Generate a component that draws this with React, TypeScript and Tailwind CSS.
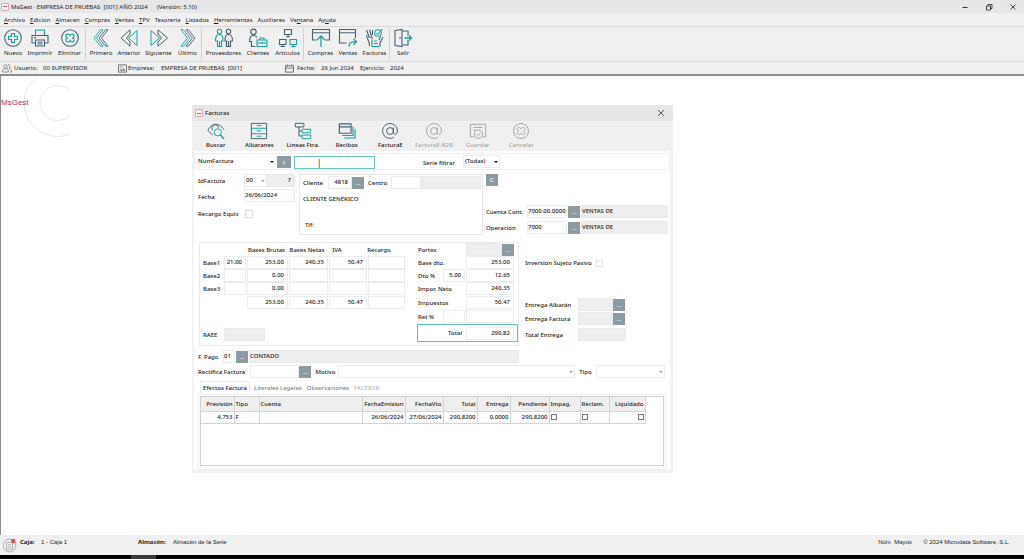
import React from 'react';
import clsx from 'clsx';

const DARK = '#456273';
const TEAL = '#17a2a2';
const GREY = '#a3a3a3';

interface IconProps {
  className?: string;
  children: React.ReactNode;
}

function Icon({ className, children }: IconProps) {
  return (
    <svg
      viewBox="0 0 20 20"
      fill="none"
      stroke={DARK}
      strokeWidth={1.1}
      aria-hidden="true"
      className={clsx('shrink-0', className ?? 'size-5')}
    >
      {children}
    </svg>
  );
}

const QUAD =
  'M10 7.6C9 5.4 5.6 5.6 5.8 8.2C6 9.4 7 9.4 7.4 10C7 10.6 6 10.6 5.8 11.8C5.6 14.4 9 14.6 10 12.4C11 14.6 14.4 14.4 14.2 11.8C14 10.6 13 10.6 12.6 10C13 9.4 14 9.4 14.2 8.2C14.4 5.6 11 5.4 10 7.6Z';

const icons = {
  nuevo: (
    <>
      <circle cx="10" cy="10" r="8.3" />
      <path stroke={TEAL} d="M8.5 5.5h3v3h3v3h-3v3h-3v-3h-3v-3h3z" />
    </>
  ),
  imprimir: (
    <>
      <path stroke={TEAL} d="M5.5 7V2h9v5" />
      <path d="M5.5 15H2V7.5h16V15h-3.5" />
      <path d="M5.5 12h9v6h-9zM7.5 14.2h5M7.5 16h5M4 9.6h2" />
    </>
  ),
  eliminar: (
    <>
      <circle cx="10" cy="10" r="8.3" />
      <path stroke={TEAL} d={QUAD} />
    </>
  ),
  primero: (
    <g strokeWidth="0.9">
      <path stroke={TEAL} d="M9.500 1.800h2.500L5.500 10l6.500 8.200H9.500L3 10z" />
      <path d="M14.500 1.800H17L10.500 10l6.500 8.200h-2.500L8 10z" />
    </g>
  ),
  anterior: (
    <g strokeWidth="1">
      <path d="M11 1.800V6L7.500 10l3.500 4v4.200L2 10z" />
      <path stroke={TEAL} d="M18 2.500v15L9.500 10z" />
    </g>
  ),
  siguiente: (
    <g strokeWidth="1">
      <path stroke={TEAL} d="M2 2.500v15l8.500-7.500z" />
      <path d="M9 1.800V6l3.500 4L9 14v4.200L18.500 10z" />
    </g>
  ),
  ultimo: (
    <g strokeWidth="0.9">
      <path stroke={TEAL} d="M3 1.800h2.500L12 10l-6.500 8.200H3L9.500 10z" />
      <path d="M8 1.800h2.500L17 10l-6.500 8.200H8L14.500 10z" />
    </g>
  ),
  proveedores: (
    <>
      <g stroke={TEAL}>
        <circle cx="5.500" cy="3.500" r="2.200" />
        <path d="M5.500 6.500C2.500 6.500 1.500 8.500 1.500 13h2v5.500h4V13h1.500c0-4.500-.5-6.500-3.500-6.500zM5.500 13v5" />
      </g>
      <circle cx="14.500" cy="3.500" r="2.200" />
      <path d="M14.500 6.500c-3 0-3.500 2-3.500 6.500h1.500v5.500h4V13h2c0-4.500-1-6.500-4-6.500zM14.500 13v5" />
    </>
  ),
  clientes: (
    <>
      <circle cx="5.500" cy="3.800" r="2.700" />
      <path d="M9 9.500C8.300 8 7 7.500 5.500 7.500c-3 0-4 2-4 6h2v5h4" />
      <path stroke={TEAL} d="M9 12h10v6.500H9zM12 12v-2h4v2M9 15h10M14 14v2" />
    </>
  ),
  articulos: (
    <>
      <path d="M6.500 1.500h7v5h-7zM10 6.500V9M8 8.800h4" />
      <path d="M1.500 11.500H8v5H1.500zM4.800 16.500v2M2.500 18.500h4.500" />
      <path stroke={TEAL} d="M12 11.500h6.500v5H12zM15.200 16.500v2M13 18.500h4.500" />
    </>
  ),
  compras: (
    <>
      <path d="M5.500 12H1.500V1.500h17V12h-4M1.500 4.800h17" />
      <path stroke={TEAL} strokeWidth="1.300" d="M10 19V8M6 12l4-4 4 4" />
    </>
  ),
  ventas: (
    <>
      <path d="M8.500 15H1.500V1.500h16V10M1.500 4.800h16" />
      <path stroke={TEAL} strokeWidth="1.300" d="M11 18.500c0-3.500 2-4.800 7-4.800M15.500 10.800l3 2.900-3 3" />
    </>
  ),
  facturas: (
    <>
      <path d="M1.500 2l3 8M4.500 1.500l2 7M7.500 2v5M1.500 7c.5 5 3 5 3 11M8 10l-2.500-1M18 9l-3 6v3.500M15.500 8.500L14 12" />
      <circle cx="13" cy="5" r="3.300" stroke={TEAL} />
      <path stroke={TEAL} d="M11.500 5l1.200 1.300L17.500 1M7 11v7.500h7.500M9 13h3M9 15.500h4" />
    </>
  ),
  salir: (
    <>
      <path d="M2 2.500l7-1v17l-7-1zM9 3h6v5M9 17h6v-5M7 9v2" />
      <path stroke={TEAL} strokeWidth="1.300" d="M11.500 10h7M16 7.500l2.500 2.500-2.500 2.500" />
    </>
  ),
  buscar: (
    <>
      <path d="M1 9C4 3.500 8 2.500 10 2.500S16 3.500 19 9M1 9c1.500 2.500 3.500 4.300 5.500 5M6.500 9.500A3.800 3.800 0 1 1 13 6.500" />
      <circle cx="12" cy="11.500" r="4" stroke={TEAL} />
      <path stroke={TEAL} strokeWidth="1.600" d="M15 14.500l4 4.500" />
    </>
  ),
  albaranes: (
    <>
      <path d="M1.500 1.500h17v17h-17z" />
      <path stroke={TEAL} d="M7.500 4h5M7.500 9.800h5M7.500 15.800h5M2 7h16M2 13h16" />
    </>
  ),
  lineas: (
    <>
      <path d="M1.500 1.500H11v4H1.500zM5.500 5.500v10H9M5.500 10H9" />
      <path stroke={TEAL} d="M9 8h9.500v4H9z" />
      <path stroke={TEAL} d="M9 14.500h9.500v4H9z" />
    </>
  ),
  recibos: (
    <>
      <path d="M1.500 2h13v10.500h-13zM1.500 5.500h13" strokeWidth="1.300" />
      <path stroke={TEAL} strokeWidth="1.300" d="M4.500 15h12.200V5M7 17.800h12V8" />
    </>
  ),
  arroba: (
    <>
      <circle cx="10" cy="10" r="3.800" />
      <path d="M13.800 6v5.500c0 3 4.500 2.800 4.500-1.500a8.300 8.300 0 1 0-4 7" />
    </>
  ),
  guardar: (
    <>
      <path d="M5 16.500H1.500v-14h17v14H15M5 6h10M5 9h3" />
      <circle cx="10.500" cy="13.500" r="4.500" />
      <path d="M8.500 13.500l1.500 1.500 2.800-3" />
    </>
  ),
  cancelar: (
    <>
      <circle cx="10" cy="10" r="8.300" />
      <path d={QUAD} />
    </>
  ),
};

type IconName = keyof typeof icons;

interface Tool {
  icon: IconName;
  label: string;
  width: string;
}

const toolGroups: Tool[][] = [
  [
    { icon: 'nuevo', label: 'Nuevo', width: 'w-[26px]' },
    { icon: 'imprimir', label: 'Imprimir', width: 'w-[28px]' },
    { icon: 'eliminar', label: 'Eliminar', width: 'w-[31px]' },
  ],
  [
    { icon: 'primero', label: 'Primero', width: 'w-[28px]' },
    { icon: 'anterior', label: 'Anterior', width: 'w-[28px]' },
    { icon: 'siguiente', label: 'Siguiente', width: 'w-[31px]' },
    { icon: 'ultimo', label: 'Último', width: 'w-[27px]' },
  ],
  [
    { icon: 'proveedores', label: 'Proveedores', width: 'w-[41px]' },
    { icon: 'clientes', label: 'Clientes', width: 'w-[28px]' },
    { icon: 'articulos', label: 'Artículos', width: 'w-[31px]' },
  ],
  [
    { icon: 'compras', label: 'Compras', width: 'w-[31px]' },
    { icon: 'ventas', label: 'Ventas', width: 'w-[24px]' },
    { icon: 'facturas', label: 'Facturas', width: 'w-[29px]' },
  ],
  [{ icon: 'salir', label: 'Salir', width: 'w-[24px]' }],
];

const menus: [string, string, string][] = [
  ['', 'A', 'rchivo'],
  ['', 'E', 'dicion'],
  ['', 'A', 'lmacen'],
  ['', 'C', 'ompras'],
  ['', 'V', 'entas'],
  ['', 'T', 'PV'],
  ['Tesoreria', '', ''],
  ['', 'L', 'istados'],
  ['', 'H', 'erramientas'],
  ['Auxiliares', '', ''],
  ['Ve', 'n', 'tana'],
  ['Ay', 'u', 'da'],
];

const dialogTools: { icon: IconName; label: string; disabled?: boolean }[] = [
  { icon: 'buscar', label: 'Buscar' },
  { icon: 'albaranes', label: 'Albaranes' },
  { icon: 'lineas', label: 'Lineas Ftra.' },
  { icon: 'recibos', label: 'Recibos' },
  { icon: 'arroba', label: 'FacturaE' },
  { icon: 'arroba', label: 'FacturaE-B2B', disabled: true },
  { icon: 'guardar', label: 'Guardar', disabled: true },
  { icon: 'cancelar', label: 'Cancelar', disabled: true },
];

function AppBadge() {
  return (
    <span className="flex size-2 items-center justify-center rounded-[1px] border border-[#dba9b4] bg-[#fbeef1]">
      <span className="h-px w-1 bg-[#c0607a]" />
    </span>
  );
}

interface FieldProps {
  id?: string;
  label?: string;
  value?: string;
  width: string;
  align?: 'left' | 'right';
  grey?: boolean;
}

function Field({ id, label, value = '', width, align = 'left', grey }: FieldProps) {
  return (
    <input
      id={id}
      aria-label={label}
      type="text"
      defaultValue={value}
      readOnly={grey}
      className={clsx(
        'block h-[13px] shrink-0 border pb-px outline-none',
        width,
        align === 'right' && 'pr-[3px] text-right',
        grey ? 'border-[#eaeaea] bg-[#eeeeee]' : 'border-[#ececec] bg-white',
      )}
    />
  );
}

function Dots({ label, children = '...' }: { label: string; children?: React.ReactNode }) {
  return (
    <button
      type="button"
      aria-label={label}
      className="flex h-3 w-3 shrink-0 items-center justify-center bg-[#8b9ba1] text-white"
    >
      {children}
    </button>
  );
}

interface PickerProps {
  id?: string;
  label?: string;
  value?: string;
  width: string;
  border?: boolean;
  faint?: boolean;
}

function Picker({ id, label, value = '', width, border = true, faint }: PickerProps) {
  return (
    <div className={clsx('relative shrink-0', width)}>
      <select
        id={id}
        aria-label={label}
        className={clsx(
          'block h-[13px] w-full appearance-none bg-white px-px pb-px outline-none',
          border && 'border border-[#ececec]',
        )}
      >
        <option>{value}</option>
      </select>
      <svg
        viewBox="0 0 4 2"
        fill={faint ? '#a0a0a0' : '#111111'}
        className="pointer-events-none absolute right-[2px] top-[6px] h-[2px] w-1"
      >
        <path d="M0 0h4L2 2z" />
      </svg>
    </div>
  );
}

const bases = [
  { name: 'Base1', pct: '21,00', values: ['253,00', '240,35', '50,47', ''] },
  { name: 'Base2', pct: '', values: ['0,00', '', '', ''] },
  { name: 'Base3', pct: '', values: ['0,00', '', '', ''] },
];

const totals = ['253,00', '240,35', '50,47', ''];
const headings = ['Bases Brutas', 'Bases Netas', 'IVA', 'Recargo'];
const colWidths = ['w-[41px]', 'w-[39px]', 'w-[38px]', 'w-[37px]'];
const headWidths = ['w-[41px]', 'w-[40px]', 'w-[20px]', 'w-[64px]'];

function BasesGrid() {
  return (
    <div className="w-[214px] shrink-0 pl-[3px]">
      <div className="flex h-[13px] items-center pl-[43px]">
        {headings.map((heading, i) => (
          <span key={heading} className={clsx('shrink-0 whitespace-nowrap text-center', headWidths[i])}>
            {heading}
          </span>
        ))}
      </div>
      {bases.map((base) => (
        <div key={base.name} className="flex items-center gap-px">
          <span className="w-5 shrink-0 pt-px">{base.name}</span>
          <Field label={`${base.name} %`} value={base.pct} width="w-[22px]" align="right" />
          {base.values.map((value, i) => (
            <Field
              key={headings[i]}
              label={`${base.name} ${headings[i]}`}
              value={value}
              width={colWidths[i]}
              align="right"
            />
          ))}
        </div>
      ))}
      <div className="mt-px flex gap-px pl-[44px]">
        {totals.map((value, i) => (
          <Field
            key={headings[i]}
            label={`Total ${headings[i]}`}
            value={value}
            width={colWidths[i]}
            align="right"
          />
        ))}
      </div>
      <div className="mt-[19px] flex items-center gap-px">
        <label htmlFor="raee" className="w-5">
          RAEE
        </label>
        <Field id="raee" width="w-[41px]" grey />
      </div>
    </div>
  );
}

function TotalsColumn() {
  return (
    <div className="flex w-[101px] shrink-0 flex-col">
      <div className="flex h-[13px] items-center pl-px">
        <label htmlFor="portes" className="grow">
          Portes
        </label>
        <Field id="portes" width="w-9" grey />
        <div className="pr-1">
          <Dots label="Buscar portes" />
        </div>
      </div>
      <div className="flex items-center pl-px pr-1">
        <label htmlFor="basedto" className="grow pt-px">
          Base dto.
        </label>
        <Field id="basedto" value="253,00" width="w-12" align="right" />
      </div>
      <div className="flex items-center gap-px pl-px pr-1">
        <label htmlFor="dto" className="grow">
          Dto %
        </label>
        <Field id="dto" value="5,00" width="w-[22px]" align="right" />
        <Field label="Importe descuento" value="12,65" width="w-12" align="right" />
      </div>
      <div className="flex items-center pl-px pr-1">
        <label htmlFor="neto" className="grow">
          Impor. Neto
        </label>
        <Field id="neto" value="240,35" width="w-12" align="right" />
      </div>
      <div className="mt-px flex items-center pl-px pr-1">
        <label htmlFor="impuestos" className="grow">
          Impuestos
        </label>
        <Field id="impuestos" value="50,47" width="w-12" align="right" />
      </div>
      <div className="mt-px flex items-center gap-px pl-px pr-1">
        <label htmlFor="ret" className="grow">
          Ret %
        </label>
        <Field id="ret" width="w-[22px]" />
        <Field label="Importe retención" width="w-12" />
      </div>
      <div className="mt-px flex h-[18px] items-center gap-1 border border-[#5fbfbf] pr-[3px]">
        <label htmlFor="total" className="grow text-right">
          Total
        </label>
        <Field id="total" value="290,82" width="w-12" align="right" />
      </div>
    </div>
  );
}

function CustomerSection() {
  return (
    <div className="flex h-[62px] pl-1">
      <div className="flex w-[101px] shrink-0 flex-col gap-[2px]">
        <div className="flex items-center">
          <label htmlFor="idfactura" className="w-[46px] pt-px">
            IdFactura
          </label>
          <Picker id="idfactura" value="00" width="w-[23px]" faint />
          <Field label="Número" value="7" width="w-[28px]" align="right" grey />
        </div>
        <div className="flex items-center">
          <label htmlFor="fecha" className="w-[46px] pt-[2px]">
            Fecha
          </label>
          <Field id="fecha" value="26/06/2024" width="w-[51px]" />
        </div>
        <div className="flex h-[14px] items-end">
          <label htmlFor="recargo" className="w-[47px] whitespace-nowrap">
            Recargo Equiv
          </label>
          <input id="recargo" type="checkbox" className="size-2 appearance-none border border-[#dcdcdc]" />
        </div>
      </div>
      <div className="flex h-[61px] w-[184px] shrink-0 flex-col border border-[#e6e6e6] p-px">
        <div className="flex items-center">
          <label htmlFor="cliente" className="w-[27px] pl-[2px]">
            Cliente
          </label>
          <Field id="cliente" value="4818" width="w-6" align="right" />
          <Dots label="Buscar cliente" />
          <label htmlFor="centro" className="w-[27px] pl-1">
            Centro
          </label>
          <Field id="centro" width="w-[30px]" />
          <Field label="Nombre del centro" width="w-[60px]" grey />
        </div>
        <span className="pl-[2px] pt-[6px]">CLIENTE GENÉRICO</span>
        <span className="pl-1 pt-[18px]">Tlf:</span>
      </div>
      <div className="flex grow flex-col gap-[3px] pl-[3px]">
        <div className="mb-4">
          <Dots label="Consultar cliente">C</Dots>
        </div>
        <div className="flex items-center gap-px">
          <label htmlFor="cuenta" className="w-10 whitespace-nowrap pt-px">
            Cuenta Cont.
          </label>
          <Field id="cuenta" value="7000.00.0000" width="w-10" />
          <Dots label="Buscar cuenta" />
          <Field label="Nombre de cuenta" value="VENTAS DE" width="w-[87px]" grey />
        </div>
        <div className="flex items-center gap-px">
          <label htmlFor="operacion" className="w-10 pt-px">
            Operación
          </label>
          <Field id="operacion" value="7000" width="w-10" />
          <Dots label="Buscar operación" />
          <Field label="Nombre de operación" value="VENTAS DE" width="w-[87px]" grey />
        </div>
      </div>
    </div>
  );
}

function DeliverySection() {
  return (
    <div className="flex flex-col gap-px pl-[6px] pt-[15px]">
      <div className="mb-[27px] flex h-3 items-center gap-1">
        <label htmlFor="pasivo">Inversión Sujeto Pasivo</label>
        <input id="pasivo" type="checkbox" className="size-[7px] appearance-none border border-[#e3e3e3]" />
      </div>
      <div className="mt-px flex items-center">
        <label htmlFor="albaran" className="w-[53px] whitespace-nowrap">
          Entrega Albarán
        </label>
        <Field id="albaran" width="w-[35px]" grey />
        <Dots label="Buscar albarán" />
      </div>
      <div className="flex items-center">
        <label htmlFor="factura" className="w-[53px] whitespace-nowrap">
          Entrega Factura
        </label>
        <Field id="factura" width="w-[35px]" grey />
        <Dots label="Buscar factura" />
      </div>
      <div className="mt-[2px] flex items-center">
        <label htmlFor="entrega" className="w-[53px]">
          Total Entrega
        </label>
        <Field id="entrega" width="w-12" grey />
      </div>
    </div>
  );
}

const columns = [
  { name: 'Previsión', width: 'w-[33px]', right: true, value: '4.753' },
  { name: 'Tipo', width: 'w-[25px]', right: false, value: 'F' },
  { name: 'Cuenta', width: 'w-[103px]', right: false, value: '' },
  { name: 'FechaEmision', width: 'w-[43px]', right: true, value: '26/06/2024' },
  { name: 'FechaVto', width: 'w-[38px]', right: true, value: '27/06/2024' },
  { name: 'Total', width: 'w-[34px]', right: true, value: '290,8200' },
  { name: 'Entrega', width: 'w-[33px]', right: true, value: '0,0000' },
  { name: 'Pendiente', width: 'w-[39px]', right: true, value: '290,8200' },
  { name: 'Impag.', width: 'w-[31px]', right: false, check: true },
  { name: 'Reclam.', width: 'w-[29px]', right: false, check: true },
  { name: 'Liquidado', width: 'w-[36px]', right: true, check: true },
];

function EffectsTable() {
  return (
    <div className="h-[70px] border border-[#cfcfcf]">
      <table className="table-fixed border-collapse">
        <thead>
          <tr className="h-[14px] bg-[#efefef]">
            {columns.map((col) => (
              <th
                key={col.name}
                className={clsx(
                  'border-b border-r border-[#d4d4d4] p-0 px-px font-medium',
                  col.width,
                  col.right ? 'text-right' : 'text-left',
                )}
              >
                {col.name}
              </th>
            ))}
          </tr>
        </thead>
        <tbody>
          <tr className="h-3">
            {columns.map((col) => (
              <td
                key={col.name}
                className={clsx(
                  'border-b border-r border-[#d4d4d4] p-0 px-px',
                  col.right ? 'text-right' : 'text-left',
                )}
              >
                {col.check ? (
                  <input
                    type="checkbox"
                    aria-label={col.name}
                    className="block size-[6px] appearance-none border border-[#777777] last:ml-auto"
                    style={{ marginLeft: col.right ? 'auto' : 0 }}
                  />
                ) : (
                  col.value
                )}
              </td>
            ))}
          </tr>
        </tbody>
      </table>
    </div>
  );
}

function InvoiceDialog() {
  return (
    <section className="absolute left-[191px] top-[29px] w-[481px] border-b-[3px] border-l-2 border-r-[3px] border-[#f2f2f2] bg-white text-[6px] font-medium leading-[8px]">
      <header className="-ml-[2px] -mr-[3px] flex h-4 items-center gap-[2px] bg-[#e7e7e7] pl-[3px] pr-2">
        <AppBadge />
        <h2 className="grow">Facturas</h2>
        <button type="button" aria-label="Cerrar">
          <svg viewBox="0 0 8 8" stroke="#333333" strokeWidth="0.800" className="size-2">
            <path d="M1 1l6 6M7 1L1 7" />
          </svg>
        </button>
      </header>
      <div className="-ml-[2px] -mr-[3px] bg-[#f0f0f0] pl-[2px]">
        <div className="flex h-[30px] w-[349px]">
          {dialogTools.map((tool) => (
            <button
              key={tool.label}
              type="button"
              disabled={tool.disabled}
              className={clsx(
                'flex flex-1 basis-0 flex-col items-center whitespace-nowrap pt-px',
                tool.disabled && 'text-[#a8a8a8]',
              )}
            >
              <Icon className={clsx('size-[18px]', tool.disabled && 'stroke-[#a3a3a3]')}>
                {icons[tool.icon]}
              </Icon>
              <span className="pt-px">{tool.label}</span>
            </button>
          ))}
        </div>
      </div>

      <div className="mt-[2px] flex h-[17px] items-start border border-[#eeeeee] pl-[2px] pt-px">
        <Picker label="Campo de búsqueda" value="NumFactura" width="w-[79px]" border={false} />
        <div className="pl-px pt-px">
          <button
            type="button"
            aria-label="Buscar siguiente"
            className="flex h-3 w-[14px] items-center justify-center bg-[#8b9ba1] text-[8px] text-white"
          >
            ›
          </button>
        </div>
        <div className="flex w-[84px] pl-[3px] pt-px">
          <input
            aria-label="Texto de búsqueda"
            type="text"
            defaultValue="|"
            className="h-[13px] w-full border border-[#6cc4c4] pb-px pl-[22px] text-[8px] font-normal outline-none"
          />
        </div>
        <label htmlFor="serie" className="ml-[48px] w-[40px] pt-1">
          Serie filtrar
        </label>
        <Picker id="serie" value="(Todas)" width="w-[37px]" />
      </div>

      <div className="pt-[4px]">
        <CustomerSection />
      </div>

      <div className="flex pl-[5px] pt-[6px]">
        <div className="flex h-[104px] w-[320px] shrink-0 justify-between border border-[#e9e9e9]">
          <BasesGrid />
          <TotalsColumn />
        </div>
        <DeliverySection />
      </div>

      <div className="flex items-center gap-px pl-1 pt-1">
        <label htmlFor="pago" className="w-[24px]">
          F. Pago
        </label>
        <Field id="pago" value="01" width="w-3" />
        <Dots label="Buscar forma de pago" />
        <Field label="Forma de pago" value="CONTADO" width="w-[270px]" grey />
      </div>
      <div className="flex items-center pl-1 pr-[5px] pt-[2px]">
        <label htmlFor="rectifica" className="w-[53px] whitespace-nowrap">
          Rectifica Factura
        </label>
        <Field id="rectifica" width="w-[49px]" />
        <Dots label="Buscar factura rectificada" />
        <label htmlFor="motivo" className="w-[27px] pl-1">
          Motivo
        </label>
        <Picker id="motivo" width="w-[237px]" faint />
        <label htmlFor="tipo" className="w-[21px] pl-1">
          Tipo
        </label>
        <Picker id="tipo" width="w-[69px]" faint />
      </div>

      <div role="tablist" className="flex h-[16px] items-end gap-1 pl-[6px] text-[#858585]">
        <button
          type="button"
          role="tab"
          aria-selected="true"
          className="h-[13px] w-[50px] whitespace-nowrap border-x border-t border-[#eaeaea] text-[#222222]"
        >
          Efectos Factura
        </button>
        <button type="button" role="tab" aria-selected="false" className="h-[13px] whitespace-nowrap">
          Literales Legales
        </button>
        <button type="button" role="tab" aria-selected="false" className="h-[13px] whitespace-nowrap pl-px">
          Observaciones
        </button>
        <button type="button" role="tab" disabled className="h-[13px] whitespace-nowrap pl-px text-[#b8b8b8]">
          FACEB2B
        </button>
      </div>
      <div role="tabpanel" className="ml-1 mr-1 border border-[#eeeeee] px-px pb-[3px] pt-px">
        <EffectsTable />
      </div>
    </section>
  );
}

function TitleBar() {
  return (
    <header className="flex h-[13px] shrink-0 items-center bg-[#e7e7e7] pl-px pr-[7px]">
      <AppBadge />
      <h1 className="grow whitespace-pre pl-[2px]">
        MsGest · EMPRESA DE PRUEBAS  [001] AÑO 2024{'      '}(Versión: 5.10)
      </h1>
      <div className="flex gap-4">
        <button type="button" aria-label="Minimizar">
          <svg viewBox="0 0 8 8" stroke="#222222" strokeWidth="0.900" className="size-2">
            <path d="M1.500 4.500h5" />
          </svg>
        </button>
        <button type="button" aria-label="Restaurar">
          <svg viewBox="0 0 8 8" fill="none" stroke="#222222" strokeWidth="0.800" className="size-2">
            <path d="M1.500 3h4v4h-4zM3 3V1.500h4v4H5.500" />
          </svg>
        </button>
        <button type="button" aria-label="Cerrar">
          <svg viewBox="0 0 8 8" stroke="#222222" strokeWidth="0.800" className="size-2">
            <path d="M1.500 1.500l5 5M6.500 1.500l-5 5" />
          </svg>
        </button>
      </div>
    </header>
  );
}

function InfoBar() {
  return (
    <div className="flex h-[13px] shrink-0 items-center whitespace-pre border-t border-[#d9d9d9]">
      <Icon className="ml-[2px] size-[10px]">
        <g stroke="#777777" strokeWidth="1.500">
          <circle cx="7" cy="7" r="3.500" />
          <path d="M1 18c0-5 2-7 6-7s6 2 6 7zM12 3c4-1 5 5 2 7 4 1 5 4 5 8h-3" />
        </g>
      </Icon>
      <span className="w-[29px] pl-[2px]">Usuario:</span>
      <span className="w-[77px] pl-[2px]">00 SUPERVISOR</span>
      <Icon className="size-[9px]">
        <g stroke="#555555" strokeWidth="1.800">
          <path d="M1 2h18v16H1zM5 6h3M5 14h10l-4-6M5 10l4 4" />
        </g>
      </Icon>
      <span className="w-[34px] pl-px">Empresa:</span>
      <span className="w-[124px]">EMPRESA DE PRUEBAS  [001]</span>
      <Icon className="size-[9px]">
        <g stroke="#555555" strokeWidth="1.800">
          <path d="M1 4h18v14H1zM1 9h18M5 1v4M15 1v4" />
        </g>
      </Icon>
      <span className="w-[27px] pl-[3px]">Fecha:</span>
      <span className="w-[39px]">26 Jun 2024</span>
      <span className="w-[30px]">Ejercicio:</span>
      <span>2024</span>
    </div>
  );
}

export default function App() {
  return (
    <div className="flex h-screen flex-col overflow-hidden bg-[#f0f0f0] font-['Noto_Sans',sans-serif] text-[6px] leading-[8px] text-[#1c1c1c]">
      <TitleBar />
      <nav className="flex h-[14px] shrink-0 items-center gap-[5px] border-b border-[#d9d9d9] pl-1">
        {menus.map(([before, key, after]) => (
          <button key={before + key + after} type="button">
            {before}
            <u>{key}</u>
            {after}
          </button>
        ))}
      </nav>
      <div className="flex h-[34px] shrink-0 py-px">
        {toolGroups.map((group, i) => (
          <div key={group[0].label} className={clsx('flex', i > 0 && 'border-l border-[#cfcfcf] pl-px')}>
            {group.map((tool) => (
              <button
                key={tool.label}
                type="button"
                className={clsx('flex shrink-0 flex-col items-center whitespace-nowrap', tool.width)}
              >
                <Icon>{icons[tool.icon]}</Icon>
                <span className="pt-px">{tool.label}</span>
              </button>
            ))}
          </div>
        ))}
      </div>
      <InfoBar />

      <main className="relative grow overflow-hidden border-l border-t-2 border-[#8c8c8c] bg-white">
        <svg
          viewBox="0 0 69 62"
          fill="none"
          stroke="#ecd9de"
          strokeWidth="0.800"
          className="absolute left-0 top-0 h-[62px] w-[69px]"
        >
          <circle cx="56.500" cy="27" r="17.500" />
          <circle cx="56.500" cy="27" r="33.500" />
        </svg>
        <div className="absolute left-0 top-[23px] font-['Liberation_Sans',sans-serif] text-[8px] text-[#a8325a]">
          MsGest
        </div>
        <InvoiceDialog />
      </main>

      <footer className="flex h-[20px] shrink-0 items-start whitespace-pre pl-[2px] pr-[14px] pt-[3px] font-['Liberation_Sans',sans-serif]">
        <Icon className="size-[15px]">
          <circle cx="10" cy="10" r="8.500" stroke={GREY} />
          <path stroke={GREY} d="M6 6h8v9H6zM8 9h4M8 12h4" />
          <circle cx="15" cy="4" r="3" stroke="none" fill="#e8505b" />
        </Icon>
        <span className="w-[21px] pl-[3px] font-['Noto_Sans',sans-serif] font-bold">Caja:</span>
        <span className="w-[100px] pl-[3px]">1 - Caja 1</span>
        <span className="w-[35px] font-['Noto_Sans',sans-serif] font-bold">Almacén:</span>
        <span className="grow">Almacén de la Serie</span>
        <span className="w-[45px]">Núm  Mayús</span>
        <span>© 2024 Microdata Software, S.L.</span>
      </footer>
      <div className="h-1 shrink-0 bg-black pl-[131px]">
        <div className="h-full w-[25px] bg-[#3a3a3a]" />
      </div>
    </div>
  );
}
